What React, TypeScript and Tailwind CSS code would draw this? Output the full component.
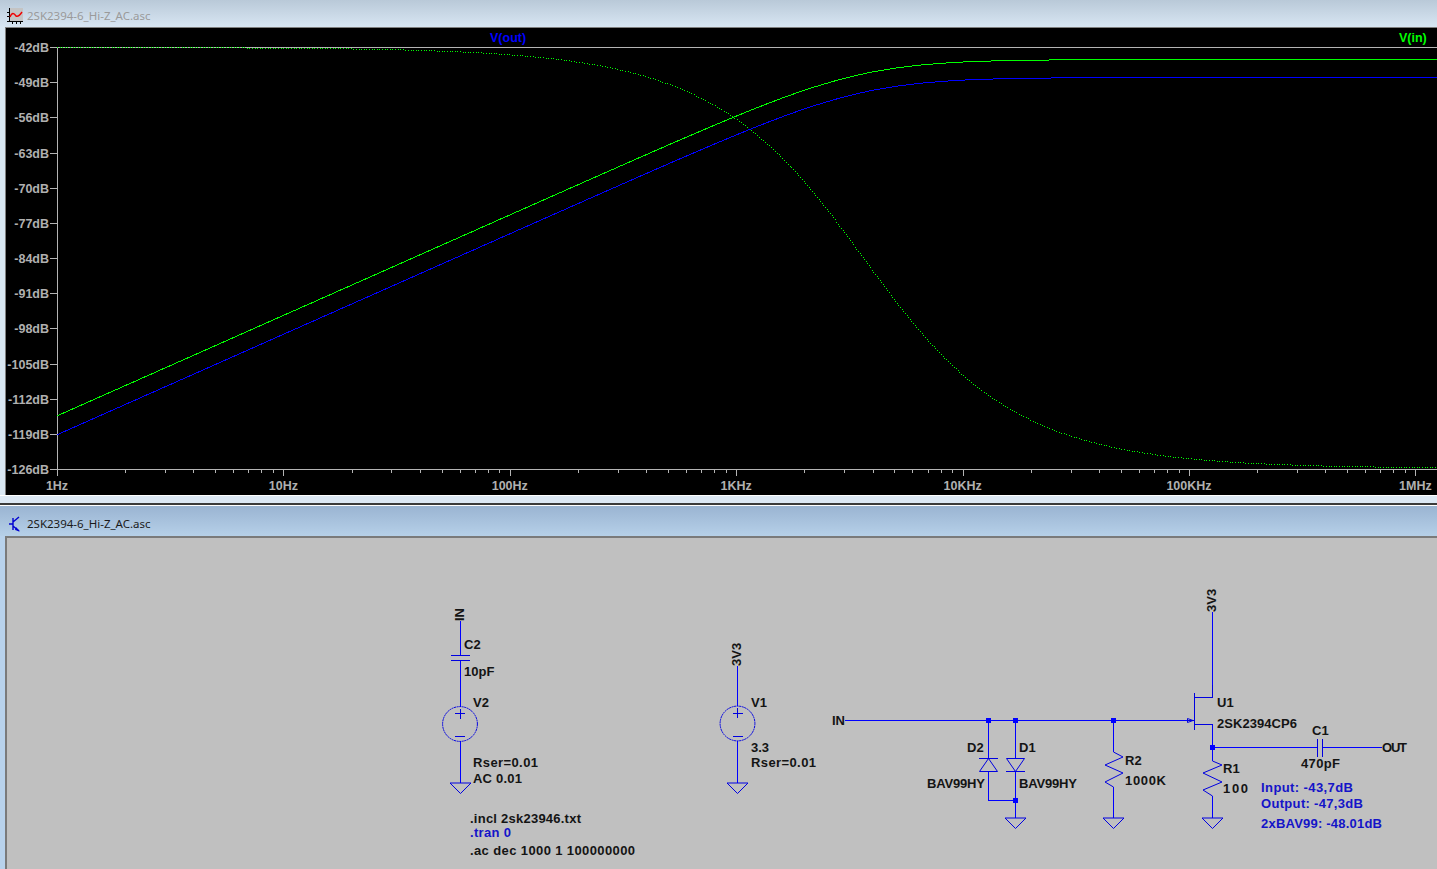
const DB_LABELS = ['-42dB', '-49dB', '-56dB', '-63dB', '-70dB', '-77dB', '-84dB', '-91dB', '-98dB', '-105dB', '-112dB', '-119dB', '-126dB']
const HZ_LABELS = ['1Hz', '10Hz', '100Hz', '1KHz', '10KHz', '100KHz', '1MHz']

const X0 = 57
const DECADE = 226.4
const Y_TOP = 47
const Y_BOTTOM = 469

const tickX = (decade: number, n: number) => X0 + (decade + Math.log10(n)) * DECADE

// first order high pass, drawn straight in pixel space
function magnitude(yFlat: number, corner: number) {
  const pts: string[] = []
  for (let x = X0; x <= 1437; x += 2) {
    const r = Math.pow(10, (x - corner) / DECADE)
    const db = 20 * Math.log10(r / Math.sqrt(1 + r * r))
    pts.push(`${x},${(yFlat - db * 5.024).toFixed(1)}`)
  }
  return pts.join(' ')
}

const phaseY = (x: number) => {
  const r = Math.pow(10, (x - 863) / DECADE)
  return Y_TOP + 421 * (Math.atan(r) / (Math.PI / 2))
}

// phase trace is single pixels spaced out along the curve
function phaseDots() {
  let d = ''
  let x = X0
  while (x < 1437) {
    const y = phaseY(x)
    d += `M${Math.round(x)} ${Math.round(y)}h1v1h-1z`
    const slope = Math.abs(phaseY(x + 0.1) - y) / 0.1
    x += 2.6 / Math.sqrt(1 + slope * slope)
  }
  return d
}

function Plot() {
  return (
    <svg viewBox="6 28 1431 467" className="block h-[467px] w-[1431px] bg-black">
      <g stroke="#b4b4b4" strokeWidth="1" shapeRendering="crispEdges">
        <line x1="50" y1="47.5" x2="1437" y2="47.5" />
        <line x1="50" y1="469.5" x2="1437" y2="469.5" />
        <line x1="57.5" y1="47" x2="57.5" y2="476" />
        {DB_LABELS.map((_, i) => {
          const y = Math.round(Y_TOP + (i * (Y_BOTTOM - Y_TOP)) / 12) + 0.5
          return <line key={i} x1="50" y1={y} x2="57" y2={y} />
        })}
        {HZ_LABELS.map((_, d) => {
          const x = Math.round(tickX(d, 1)) + 0.5
          return <line key={d} x1={x} y1="469" x2={x} y2="476" />
        })}
        {[0, 1, 2, 3, 4, 5, 6].map((d) =>
          [2, 3, 4, 5, 6, 7, 8, 9].map((n) => {
            const x = Math.round(tickX(d, n)) + 0.5
            return x < 1437 ? <line key={`${d}-${n}`} x1={x} y1="469" x2={x} y2="473" /> : null
          })
        )}
      </g>
      <path d={phaseDots()} fill="#00ff00" shapeRendering="crispEdges" />
      <g fill="none" strokeWidth="1" shapeRendering="crispEdges">
        <polyline points={magnitude(77.5, 862)} stroke="#0000ff" />
        <polyline points={magnitude(59.5, 860)} stroke="#00ff00" />
      </g>
      <g className="fill-[#b0b0b0] font-['Liberation_Sans'] text-[12.5px] font-bold">
        {DB_LABELS.map((t, i) => (
          <text key={t} x="49" y={Y_TOP + (i * (Y_BOTTOM - Y_TOP)) / 12 + 5} textAnchor="end">
            {t}
          </text>
        ))}
        {HZ_LABELS.map((t, d) => (
          <text key={t} x={tickX(d, 1)} y="490" textAnchor="middle">
            {t}
          </text>
        ))}
      </g>
      <g className="font-['Liberation_Sans'] text-[12.5px] font-bold">
        <text x="490" y="42" className="fill-[#0000ff]">V(out)</text>
        <text x="1399" y="42" className="fill-[#00ff00]">V(in)</text>
      </g>
    </svg>
  )
}

function Ground({ x, y }: { x: number; y: number }) {
  return <polygon points={`${x - 10.5},${y} ${x + 10.5},${y} ${x},${y + 10.5}`} fill="none" stroke="#0000e0" strokeWidth="1" />
}

function Source({ x, y }: { x: number; y: number }) {
  return (
    <g fill="none" stroke="#0000e0" strokeWidth="1">
      <circle cx={x} cy={y} r="17.4" strokeDasharray="2 0.6" />
      <path d={`M${x - 5} ${y - 10.5}H${x + 5}M${x} ${y - 15.5}V${y - 5.5}M${x - 5} ${y + 12.5}H${x + 5}`} shapeRendering="crispEdges" />
    </g>
  )
}

function Junction({ x, y }: { x: number; y: number }) {
  return <rect x={x - 2.5} y={y - 2.5} width="5" height="5" fill="#0000ff" shapeRendering="crispEdges" />
}

// text, x, baseline, width where the reference runs wider than Liberation
const LABELS: [string, number, number, number?][] = [
  ['C2', 464, 649],
  ['10pF', 464, 676],
  ['V2', 473, 707],
  ['Rser=0.01', 473, 767, 65],
  ['AC 0.01', 473, 783, 49],
  ['.incl 2sk23946.txt', 470, 823, 111],
  ['.ac dec 1000 1 100000000', 470, 855, 165],
  ['V1', 751, 707],
  ['3.3', 751, 752],
  ['Rser=0.01', 751, 767, 65],
  ['IN', 832, 725],
  ['D2', 967, 752],
  ['D1', 1019, 752],
  ['BAV99HY', 927, 788, 58],
  ['BAV99HY', 1019, 788, 58],
  ['R2', 1125, 765],
  ['1000K', 1125, 785, 41],
  ['R1', 1223, 773],
  ['100', 1223, 793, 25],
  ['U1', 1217, 707],
  ['2SK2394CP6', 1217, 728, 80],
  ['C1', 1312, 735],
  ['470pF', 1301, 768, 39],
  ['OUT', 1382, 752, 25],
]

const NOTES: [string, number, number, number][] = [
  ['.tran 0', 470, 837, 41],
  ['Input: -43,7dB', 1261, 792, 92],
  ['Output: -47,3dB', 1261, 808, 102],
  ['2xBAV99: -48.01dB', 1261, 828, 121],
]

const NETS: [string, number, number][] = [
  ['IN', 464, 621],
  ['3V3', 741, 666],
  ['3V3', 1216, 612],
]

function Schematic() {
  return (
    <svg viewBox="7 538 1430 331" className="block h-[331px] w-[1430px] bg-[#c0c0c0]">
      {/* wires */}
      <path
        d="M460.5 621V655M460.5 660V707M460.5 741V783M737.5 666V706M737.5 741V783M845 720.5H1187M988.5 720V758M988.5 771V800.5H1015.5M1015.5 720V758M1015.5 771V818M1113.5 720V752M1113.5 787V818M1212.5 612V685M1212.5 724V761M1212.5 796V818M1212.5 747.5H1317M1322 747.5H1382"
        fill="none"
        stroke="#0000ff"
        strokeWidth="1"
        shapeRendering="crispEdges"
      />
      {/* component bodies */}
      <g fill="none" stroke="#0000e0" strokeWidth="1">
        <path
          d="M451 655.5H470M451 660.5H470M979 758.5H998M1006 771.5H1025M1317.5 739V757M1322.5 739V757M1194.5 693V730M1194.5 697.5H1212.5M1212.5 685V697M1194.5 724.5H1212.5"
          shapeRendering="crispEdges"
        />
        <polygon points="988.5,758.5 979.5,771.5 997.5,771.5" />
        <polygon points="1015.5,771.5 1006.5,758.5 1024.5,758.5" />
        <polyline points="1113.5,752 1123,757 1105,765 1123,773 1105,782 1113.5,787" />
        <polyline points="1212.5,761 1222,765 1203,773 1222,782 1203,790 1212.5,796" />
        <path d="M1187 720.5H1194M1187.5 718.5L1193 720.5L1187.5 722.5Z" />
      </g>
      <Source x={460} y={724} />
      <Source x={737.5} y={723.5} />
      <Ground x={460.5} y={783} />
      <Ground x={737.5} y={783} />
      <Ground x={1015.5} y={818} />
      <Ground x={1113.5} y={818} />
      <Ground x={1212.5} y={818} />
      <Junction x={988.5} y={720.5} />
      <Junction x={1015.5} y={720.5} />
      <Junction x={1015.5} y={800.5} />
      <Junction x={1113.5} y={720.5} />
      <Junction x={1212.5} y={747.5} />
      <g className="fill-[#141414] font-['Liberation_Sans'] text-[13px] font-bold">
        {LABELS.map(([t, x, y, w]) => (
          <text key={`${t}-${x}`} x={x} y={y} textLength={w}>
            {t}
          </text>
        ))}
        {NETS.map(([t, x, y]) => (
          <text key={x} transform={`translate(${x} ${y}) rotate(-90)`}>
            {t}
          </text>
        ))}
      </g>
      <g className="fill-[#1414c8] font-['Liberation_Sans'] text-[13px] font-bold">
        {NOTES.map(([t, x, y, w]) => (
          <text key={t} x={x} y={y} textLength={w}>
            {t}
          </text>
        ))}
      </g>
    </svg>
  )
}

function PlotIcon() {
  return (
    <svg viewBox="0 0 16 16" className="h-4 w-4">
      <rect x="2" y="0" width="14" height="13" fill="#c4c4c4" />
      <path d="M2 0V14M0 13.5H16M0 4.5H2M0 8.5H2M5.5 14V16M9.5 14V16M13.5 14V16" stroke="#000" strokeWidth="1" fill="none" shapeRendering="crispEdges" />
      <path d="M3 9C5 4 7 5 9 8C11 9 13 7 15 4" stroke="#f00000" strokeWidth="1.4" fill="none" />
    </svg>
  )
}

function SchematicIcon() {
  return (
    <svg viewBox="0 0 16 16" className="h-4 w-4">
      <path d="M6 2V14M6 8H2M6 6L12 1M6 10L12 15" stroke="#0000d0" strokeWidth="1.4" fill="none" />
      <path d="M9 11L13 15.5L8 14Z" fill="#0000d0" />
    </svg>
  )
}

export default function App() {
  return (
    <div className="flex h-[869px] w-[1437px] flex-col overflow-hidden bg-white font-['Liberation_Sans']">
      {/* plot window */}
      <div className="flex h-[27px] items-center gap-1 bg-gradient-to-b from-[#b9c9d8] to-[#d8e6f3] pt-[5px] pl-[7px]">
        <PlotIcon />
        <span className="font-['Noto_Sans'] text-[11.5px] text-[#9a9a9a]">2SK2394-6_Hi-Z_AC.asc</span>
      </div>
      <div className="flex bg-[#d9e7f3]">
        <div className="w-[5px]" />
        <div className="border-t border-l border-[#7f7f7f]">
          <Plot />
        </div>
      </div>
      <div className="h-[1px] bg-white" />
      <div className="h-[7px] bg-[#dce8f4]" />
      <div className="h-[2px] bg-[#3a3a3a]" />
      <div className="h-[1px] bg-white" />

      {/* schematic window */}
      <div className="flex h-[30px] items-center gap-1 bg-gradient-to-b from-[#9ab4d2] to-[#b6d0e8] pt-[5px] pl-[7px]">
        <SchematicIcon />
        <span className="font-['Noto_Sans'] text-[11.5px] text-[#1a1a1a]">2SK2394-6_Hi-Z_AC.asc</span>
      </div>
      <div className="flex flex-1 bg-[#b8d2ec]">
        <div className="w-[5px]" />
        <div className="border-t-2 border-l-2 border-[#7a7a7a]">
          <Schematic />
        </div>
      </div>
    </div>
  )
}
